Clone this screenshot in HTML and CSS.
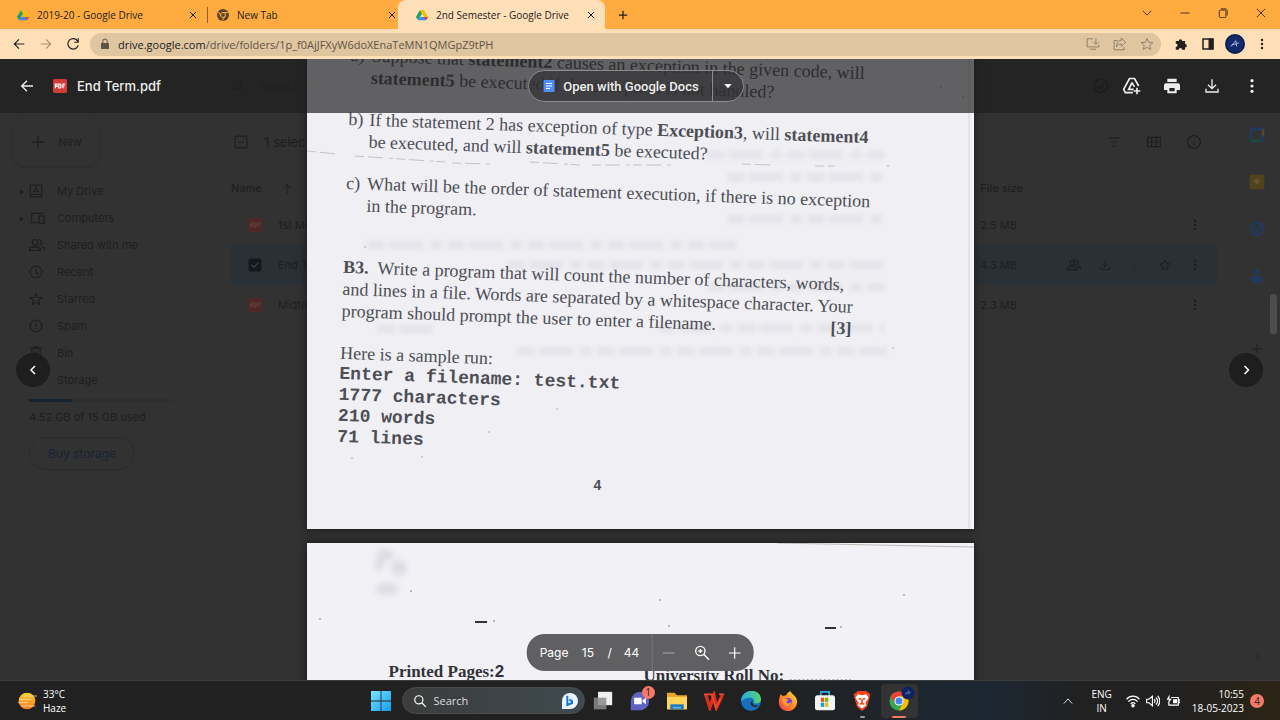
FILE: index.html
```html
<!DOCTYPE html>
<html lang="en">
<head>
<meta charset="utf-8">
<title>2nd Semester - Google Drive</title>
<link rel="stylesheet" href="styles.css">
</head>
<body>
<svg class="defs" aria-hidden="true">
  <symbol id="drive" viewBox="0 0 24 24"><g stroke="none"><path fill="#1aa260" d="M8 2 0 16l4 6.500L12 9z"/><path fill="#fbbc04" d="M8 2h8l8 14h-8z"/><path fill="#4285f4" d="M4 22.500 8 16h16l-4 6.500z"/><path fill="#ea4335" d="M16 16h8l-4 6.500z"/></g></symbol>
  <symbol id="chrome" viewBox="0 0 24 24"><g stroke="none"><circle cx="12" cy="12" r="11.500" fill="#34a853"/><path fill="#ea4335" d="M2 6.500A11.500 11.500 0 0 1 22 6.500H12L7.200 14.800z"/><path fill="#fbbc04" d="M22 6.500A11.500 11.500 0 0 1 12 23.500l4.800-8.700L12 6.500z"/><circle cx="12" cy="12" r="5.500" fill="#fff"/><circle cx="12" cy="12" r="4.200" fill="#4285f4"/></g></symbol>
  <symbol id="x" viewBox="0 0 24 24"><path d="M3 3l18 18M21 3 3 21"/></symbol>
  <symbol id="plus" viewBox="0 0 24 24"><path d="M12 2v20M2 12h20"/></symbol>
  <symbol id="back" viewBox="0 0 24 24"><path d="M21 12H4M12 4l-8 8 8 8"/></symbol>
  <symbol id="star" viewBox="0 0 24 24"><path d="m12 2.500 2.900 6.500 7.100.7-5.300 4.700 1.500 7L12 17.700l-6.200 3.700 1.500-7L2 9.700 9.100 9z"/></symbol>
  <symbol id="dots" viewBox="0 0 24 24"><g fill="currentColor" stroke="none"><circle cx="12" cy="4" r="2.400"/><circle cx="12" cy="12" r="2.400"/><circle cx="12" cy="20" r="2.400"/></g></symbol>
  <symbol id="download" viewBox="0 0 24 24"><path d="M12 2v13M6 10l6 6 6-6M3 16v5h18v-5"/></symbol>
  <symbol id="search" viewBox="0 0 24 24"><circle cx="10" cy="10" r="7"/><path d="m15 15 7 7"/></symbol>
  <symbol id="pdf" viewBox="0 0 24 24"><rect width="24" height="24" rx="3" fill="currentColor" stroke="none"/><path class="pdf-mark" d="M4 16V8.500h3v4H4M10 8.500v7h2l1.500-1.500v-4L12 8.500zM17 16V8.500h4M17 12h3"/></symbol>
  <symbol id="people" viewBox="0 0 24 24"><circle cx="9" cy="8" r="4"/><path d="M1 20v-2c2-4.500 14-4.500 16 0v2zM15 4a4 4 0 0 1 0 8M19 14c3 1 4 2.500 4 6"/></symbol>
</svg>

<header class="browser">
  <nav class="tabs" aria-label="Tabs">
    <div class="tab"><svg class="ico s12"><use href="#drive"/></svg><span>2019-20 - Google Drive</span><button aria-label="Close tab"><svg class="ico s8 bold"><use href="#x"/></svg></button></div>
    <div class="tab tab-split"><svg class="ico s12" viewBox="0 0 24 24"><circle cx="12" cy="12" r="12" fill="#5a4526" stroke="none"/><circle cx="12" cy="12" r="5" stroke="#ffab40"/><path d="M12 7h10M8 14 3 6M16 14l-5 9" stroke="#ffab40"/></svg><span>New Tab</span><button aria-label="Close tab"><svg class="ico s8 bold"><use href="#x"/></svg></button></div>
    <div class="tab tab-active"><svg class="ico s12"><use href="#drive"/></svg><span>2nd Semester - Google Drive</span><button aria-label="Close tab"><svg class="ico s8 bold"><use href="#x"/></svg></button></div>
    <button class="new-tab" aria-label="New tab"><svg class="ico s10 bold"><use href="#plus"/></svg></button>
    <div class="window-buttons">
      <button aria-label="Search tabs"><svg class="ico s10" viewBox="0 0 24 24"><path d="m2 7 10 10L22 7"/></svg></button>
      <button aria-label="Minimise"><svg class="ico s10" viewBox="0 0 24 24"><path d="M1 12h22"/></svg></button>
      <button aria-label="Restore"><svg class="ico s10" viewBox="0 0 24 24"><rect x="3" y="5" width="16" height="18" rx="3"/><path d="M7 2h12l3 3v13"/></svg></button>
      <button aria-label="Close"><svg class="ico s10" viewBox="0 0 24 24"><path d="M2 2l20 20M22 2 2 22"/></svg></button>
    </div>
  </nav>
  <div class="toolbar">
    <button aria-label="Back"><svg class="ico s14"><use href="#back"/></svg></button>
    <button class="muted" aria-label="Forward"><svg class="ico s14 flip"><use href="#back"/></svg></button>
    <button aria-label="Reload"><svg class="ico s14" viewBox="0 0 24 24"><path d="M20 7a9 9 0 1 0 1 7M21 2v7h-7"/></svg></button>
    <div class="address">
      <svg class="ico s12" viewBox="0 0 24 24"><rect x="4" y="10" width="16" height="12" rx="1" fill="#5f5545" stroke="none"/><path d="M7.500 11V6.500a4.500 4.500 0 0 1 9 0V11" stroke="#5f5545"/></svg>
      <span class="url"><b>drive.google.com</b>/drive/folders/1p_f0AjJFXyW6doXEnaTeMN1QMGpZ9tPH</span>
      <button aria-label="Install"><svg class="ico s14 thin" viewBox="0 0 24 24"><path d="M12 3H2v14h20v-4M7 21h10M17 2v10M12 8l5 5 5-5"/></svg></button>
      <button aria-label="Share"><svg class="ico s14 thin" viewBox="0 0 24 24"><path d="M8 6H2v16h17v-5M14 2l8 7-8 7v-4c-4 0-6 1-8 5 0-7 3-11 8-11z"/></svg></button>
      <button aria-label="Bookmark"><svg class="ico s14 thin"><use href="#star"/></svg></button>
    </div>
    <button aria-label="Extensions"><svg class="ico s14" viewBox="0 0 24 24"><path fill="#222" stroke="none" d="M3 7h5a3 3 0 1 1 6 0h5v5a3 3 0 1 1 0 6v4h-5a3 3 0 1 0-6 0H3v-5a3 3 0 1 0 0-6z"/></svg></button>
    <button aria-label="Side panel"><svg class="ico s12" viewBox="0 0 24 24"><rect x="2" y="2" width="20" height="20" stroke-width="3"/><path fill="#222" d="M14 2h8v20h-8z"/></svg></button>
    <button aria-label="Profile"><svg class="ico s20" viewBox="0 0 24 24"><circle cx="12" cy="12" r="11" fill="#102a6b" stroke="#081d4d"/><path d="m7 15 6-7 1 7M8 13c4 0 8-3 9-2" stroke="#c3ccec" stroke-width="1"/></svg></button>
    <button aria-label="Menu"><svg class="ico s12"><use href="#dots"/></svg></button>
  </div>
</header>

<main class="stage">
  <div class="drive">
    <aside class="side">
      <button class="new"><svg class="ico s16"><use href="#plus"/></svg>New</button>
      <nav class="side-nav">
        <a href="#"><i>▸</i><svg class="ico s14" viewBox="0 0 24 24"><rect x="2" y="2" width="20" height="20"/><path d="M2 18h20M8 13l4-7 4 7z"/></svg>My Drive</a>
        <a href="#"><i>▸</i><svg class="ico s16" viewBox="0 0 24 24"><path d="M4 17V5h18M1 19h12M15 9h8v11h-8z"/></svg>Computers</a>
        <a href="#"><i></i><svg class="ico s16"><use href="#people"/></svg>Shared with me</a>
        <a href="#"><i></i><svg class="ico s14" viewBox="0 0 24 24"><circle cx="12" cy="12" r="10"/><path d="M12 6v7l5 3"/></svg>Recent</a>
        <a href="#"><i></i><svg class="ico s14"><use href="#star"/></svg>Starred</a>
        <a href="#"><i></i><svg class="ico s14" viewBox="0 0 24 24"><circle cx="12" cy="12" r="10"/><path d="M12 6v8M12 16v2"/></svg>Spam</a>
        <a href="#"><i></i><svg class="ico s14" viewBox="0 0 24 24"><path d="M2 4h20M8 4V2h8v2M5 5v17h14V5M10 9v9M14 9v9"/></svg>Bin</a>
        <a href="#"><i></i><svg class="ico s14" viewBox="0 0 24 24"><path d="M6 18a5 5 0 0 1 0-10 7 7 0 0 1 13 2 4 4 0 0 1 0 8z"/></svg>Storage</a>
      </nav>
      <div class="quota"><div class="quota-used"></div></div>
      <p class="quota-text">4.52 GB of 15 GB used</p>
      <button class="buy">Buy storage</button>
    </aside>
    <section class="files">
      <div class="drive-search"><svg class="ico s14"><use href="#search"/></svg>Search in Drive</div>
      <div class="selection">
        <svg class="ico s14" viewBox="0 0 24 24"><rect x="2" y="2" width="20" height="20" rx="2"/><path d="M7 12h10"/></svg><span>1 selected</span>
        <svg class="ico s14" viewBox="0 0 24 24"><path d="M2 5h20M6 12h12M10 19h4"/></svg>
        <svg class="ico s14" viewBox="0 0 24 24"><path d="M1 4h22v16H1zM1 12h22M8 4v16M16 4v16"/></svg>
        <svg class="ico s14" viewBox="0 0 24 24"><circle cx="12" cy="12" r="11"/><path d="M12 11v7M12 6v2"/></svg>
      </div>
      <table>
        <thead><tr><th class="c-name">Name <svg class="ico s12 sort" viewBox="0 0 24 24"><path d="M12 22V3M4 11l8-8 8 8"/></svg></th><th>File size</th><th></th></tr></thead>
        <tbody>
          <tr><td><div class="file"><svg class="ico s14 red"><use href="#pdf"/></svg>1st Mid Term</div></td><td>2.5 MB</td><td><div class="acts"><svg class="ico s12"><use href="#dots"/></svg></div></td></tr>
          <tr class="picked"><td><div class="file"><svg class="ico s14" viewBox="0 0 24 24"><rect x="1" y="1" width="22" height="22" rx="3" fill="#15191c" stroke="none"/><path d="m6 12 4 4 8-8" stroke="#36424a"/></svg>End Term.pdf</div></td><td>4.3 MB</td><td><div class="acts"><svg class="ico s14"><use href="#people"/></svg><svg class="ico s12"><use href="#download"/></svg><svg class="ico s12 faint" viewBox="0 0 24 24"><path d="m8 20 8-16 6 12M3 18h12"/></svg><svg class="ico s12"><use href="#star"/></svg><svg class="ico s12"><use href="#dots"/></svg></div></td></tr>
          <tr><td><div class="file"><svg class="ico s14 red"><use href="#pdf"/></svg>Midterm</div></td><td>2.3 MB</td><td><div class="acts"><svg class="ico s12"><use href="#dots"/></svg></div></td></tr>
        </tbody>
      </table>
    </section>
    <aside class="apps">
      <svg class="ico s16" viewBox="0 0 24 24"><rect x="3" y="3" width="18" height="18" stroke="#20395e" stroke-width="4"/><path d="M21 3v10" stroke="#55452a" stroke-width="4"/><path d="M3 21h14" stroke="#234a30" stroke-width="4"/></svg>
      <svg class="ico s16" viewBox="0 0 24 24"><rect x="1" y="1" width="22" height="22" rx="2" fill="#51441a" stroke="none"/><circle cx="12" cy="11" r="4" fill="#625530" stroke="none"/></svg>
      <svg class="ico s16" viewBox="0 0 24 24"><circle cx="12" cy="12" r="9" stroke="#1f3a66" stroke-width="3"/><path d="m8 11 4 4 9-11" stroke="#1f3a66" stroke-width="3"/></svg>
      <svg class="ico s16" viewBox="0 0 24 24"><g fill="#1f3a5e" stroke="none"><circle cx="12" cy="6" r="4"/><rect x="4" y="12" width="16" height="10" rx="3"/></g></svg>
      <svg class="ico s12 add"><use href="#plus"/></svg>
      <svg class="ico s12 last" viewBox="0 0 24 24"><path d="m8 4 8 8-8 8"/></svg>
    </aside>
  </div>

  <div class="viewer">
    <div class="sheets">
      <article class="sheet sheet-first">
        <svg class="scan" viewBox="0 0 667 470" aria-hidden="true">
          <defs><filter id="soft"><feGaussianBlur stdDeviation="2"/></filter></defs>
          <g filter="url(#soft)" stroke="#c9c9d2" stroke-opacity=".28" stroke-width="9" stroke-dasharray="18 4 34 7 12 5" fill="none">
            <path d="M400 96h180M420 118h155M420 160h155M200 206h380M400 228h180M60 186h370M70 270h60M350 269h228M210 292h370"/>
          </g>
          <path d="M0 92l30 3M48 97l90 6M145 104l40 1M223 103l50 3M285 106h80M435 105l30 1M508 107h20" stroke="#c2c2c8" stroke-dasharray="9 4 15 6 4 3" fill="none"/>
          <g fill="#c0c0c8"><circle cx="58" cy="188" r="1"/><circle cx="45" cy="399" r="1"/><circle cx="115" cy="398" r="1"/><circle cx="250" cy="350" r="1"/><circle cx="182" cy="373" r="1"/><circle cx="581" cy="107" r="1"/><circle cx="634" cy="28" r="1"/><circle cx="656" cy="38" r="1"/><circle cx="586" cy="289" r="1"/></g>
          <path d="M662 0v470" stroke="#e4e4e8" stroke-width="2"/><path d="M666 0v470" stroke="#fff" stroke-width="1"/>
        </svg>
        <div class="print">
          <ol>
            <li><span>a)</span><p>Suppose that <b>statement2</b> causes an exception in the given code, will<br><b>statement5</b> be executed if the exception is not handled?</p></li>
            <li><span>b)</span><p>If the statement 2 has exception of type <b>Exception3</b>, will <b>statement4</b><br>be executed, and will <b>statement5</b> be executed?</p></li>
            <li><span>c)</span><p>What will be the order of statement execution, if there is no exception<br>in the program.</p></li>
          </ol>
          <div class="question"><p><b>B3.</b>&nbsp; Write a program that will count the number of characters, words,<br>and lines in a file. Words are separated by a whitespace character. Your<br>program should prompt the user to enter a filename.</p><b class="marks">[3]</b></div>
          <p class="sample-head">Here is a sample run:</p>
          <pre>Enter a filename: test.txt
1777 characters
210 words
71 lines</pre>
        </div>
        <span class="folio">4</span>
      </article>
      <article class="sheet sheet-second">
        <svg class="scan" viewBox="0 0 667 160" aria-hidden="true">
          <defs><filter id="haze"><feGaussianBlur stdDeviation="3"/></filter></defs>
          <path d="M470 0l197 4" stroke="#b9bab4" stroke-width="1"/>
          <g filter="url(#haze)" fill="#dcdce3"><ellipse cx="78" cy="12" rx="9" ry="6"/><ellipse cx="92" cy="25" rx="8" ry="8"/><ellipse cx="80" cy="46" rx="12" ry="6"/><ellipse cx="72" cy="22" rx="5" ry="6"/></g>
          <path d="M168 79h12M518 85h11" stroke="#33343a" stroke-width="2"/>
          <g fill="#a5a5ad"><circle cx="13" cy="76" r="1"/><circle cx="187" cy="78" r="1"/><circle cx="362" cy="83" r="1"/><circle cx="104" cy="48" r="1"/><circle cx="353" cy="57" r="1"/><circle cx="534" cy="84" r="1"/><circle cx="597" cy="52" r="1"/></g>
        </svg>
        <div class="form-line"><b>Printed Pages:<span class="hand">2</span></b><b>University Roll No: <span class="leader">...............</span></b></div>
      </article>
    </div>

    <header class="viewer-bar">
      <div class="doc-id"><button aria-label="Back to Drive"><svg class="ico s16"><use href="#back"/></svg></button><svg class="ico s14 pdf-icon"><use href="#pdf"/></svg><h1>End Term.pdf</h1></div>
      <div class="open-with"><button class="open"><svg class="ico s12" viewBox="0 0 24 24"><rect x="1" y="0" width="22" height="24" rx="2" fill="#4f8df7" stroke="none"/><path d="M6 7h12M6 12h12M6 17h8" stroke="#fff"/></svg>Open with Google Docs</button><button class="more" aria-label="More apps"><svg class="ico s8" viewBox="0 0 24 24"><path d="M1 6h22L12 19z" fill="#fff" stroke="none"/></svg></button></div>
      <div class="viewer-actions">
        <svg class="ico s16 ghost" viewBox="0 0 24 24"><circle cx="12" cy="12" r="10"/><path d="m7 12 4 4 6-7"/></svg>
        <button aria-label="Add shortcut to Drive"><svg class="ico s20" viewBox="0 0 24 24"><path d="M13 20H4l-2-4L9 3h6l5 9M12 8l-4 8h6M12 8l3 5M18 14v8M14 18h8"/></svg></button>
        <button aria-label="Print"><svg class="ico s16" viewBox="0 0 24 24"><path fill="#eee" stroke="none" d="M5 1h14v5H5zM3 8h18a3 3 0 0 1 3 3v7h-5v5H5v-5H0v-7a3 3 0 0 1 3-3zm5 7v5h8v-5z"/></svg></button>
        <button aria-label="Download"><svg class="ico s16"><use href="#download"/></svg></button>
        <button class="kebab" aria-label="More actions"><svg class="ico s16"><use href="#dots"/></svg></button>
      </div>
    </header>

    <button class="flip-page prev" aria-label="Previous"><svg class="ico s12 bold" viewBox="0 0 24 24"><path d="m16 4-8 8 8 8"/></svg></button>
    <button class="flip-page next" aria-label="Next"><svg class="ico s12 bold" viewBox="0 0 24 24"><path d="m9 4 8 8-8 8"/></svg></button>
    <div class="scroll-thumb"></div>

    <div class="pager">
      <label for="page-no">Page</label><input id="page-no" value="15"><span>/</span><span class="total">44</span>
      <div class="zoomers">
        <button class="dim" aria-label="Zoom out"><svg class="ico s14" viewBox="0 0 24 24"><path d="M2 12h20"/></svg></button>
        <button aria-label="Fit"><svg class="ico s16" viewBox="0 0 24 24"><circle cx="10" cy="9" r="7"/><path d="m15 14 8 8M10 6v6M7 9h6"/></svg></button>
        <button aria-label="Zoom in"><svg class="ico s14"><use href="#plus"/></svg></button>
      </div>
    </div>
  </div>
</main>

<footer class="taskbar">
  <div class="weather">
    <svg class="ico s20" viewBox="0 0 24 24"><defs><linearGradient id="sun" x2="0" y2="1"><stop stop-color="#ffcf28"/><stop offset="1" stop-color="#f27b25"/></linearGradient></defs><circle cx="12" cy="12" r="10" fill="url(#sun)" stroke="none"/><path d="M8 6h16M3 10h14M1 14h12M6 18h16" stroke="#f6d9a6" stroke-width="1"/></svg>
    <div>33°C<br>Haze</div>
  </div>
  <div class="launcher">
    <button class="app" aria-label="Start"><svg class="ico s20" viewBox="0 0 24 24"><defs><linearGradient id="win" x2="1" y2="1"><stop stop-color="#7be4ff"/><stop offset="1" stop-color="#129df0"/></linearGradient></defs><path fill="url(#win)" stroke="none" d="M0 0h11.500v11.500H0zM12.500 0H24v11.500H12.500zM0 12.500h11.500V24H0zM12.500 12.500H24V24H12.500z"/></svg></button>
    <div class="task-search"><svg class="ico s14"><use href="#search"/></svg><input aria-label="Search" placeholder="Search"><svg class="ico s16" viewBox="0 0 24 24"><circle cx="12" cy="12" r="12" fill="#eaf5ff" stroke="none"/><path d="M0 12v12h12" fill="#eaf5ff" stroke="none"/><path d="M8 4v14l7-3v-3l-4-2" stroke="#1675d8" stroke-width="3"/></svg></div>
    <button class="app" aria-label="Task view"><svg class="ico s20" viewBox="0 0 24 24"><g stroke="none"><rect x="6" y="1" width="17" height="16" fill="#eee"/><rect x="1" y="8" width="15" height="14" fill="#8b8b8b" fill-opacity=".85"/></g></svg></button>
    <button class="app" aria-label="Chat"><svg class="ico s20" viewBox="0 0 24 24"><circle cx="12" cy="12" r="11" fill="#6262c4" stroke="none"/><path d="M1 12v11h11" fill="#6262c4" stroke="none"/><path fill="#fff" stroke="none" d="M5 8h9v8H5zM15 11l4-3v8l-4-3z"/></svg><span class="badge">1</span></button>
    <button class="app" aria-label="File Explorer"><svg class="ico s20" viewBox="0 0 24 24"><g stroke="none"><path fill="#e9a520" d="M0 2h9l3 3h12v17H0z"/><path fill="#ffd65a" d="M0 7h24v15H0z"/><path fill="#1878be" d="M4 16h16v6H4z"/><path fill="#63b8e8" d="M7 19h10v2H7z"/></g></svg></button>
    <button class="app" aria-label="WPS Office"><svg class="ico s20" viewBox="0 0 24 24"><path d="M2 4l5 16L12 5l3 15 7-15" stroke="#d92d1d" stroke-width="4"/><path d="M0 4h9l5 16 6-11M9 4h4M18 4h6" stroke="#f4472f" stroke-width="2"/></svg></button>
    <button class="app" aria-label="Edge"><svg class="ico s20" viewBox="0 0 24 24"><defs><linearGradient id="edge" x2="1"><stop stop-color="#24a8e8"/><stop offset="1" stop-color="#55d66b"/></linearGradient></defs><g stroke="none"><circle cx="12" cy="12" r="12" fill="#1770bd"/><path fill="url(#edge)" d="M0 12C1-4 24-4 24 10c0 5-6 6-9 4 2-2 0-6-4-6-6 0-9 3-11 4z"/><path fill="#222" d="M14 12c-2 4 3 7 8 5-6 5-12 0-10-4z"/></g></svg></button>
    <button class="app" aria-label="Firefox"><svg class="ico s20" viewBox="0 0 24 24"><defs><linearGradient id="fox" x1="1" x2="0" y2="1"><stop stop-color="#ffe23c"/><stop offset=".5" stop-color="#ff8b26"/><stop offset="1" stop-color="#f0325c"/></linearGradient></defs><g stroke="none"><path fill="url(#fox)" d="M3 4l3 2 4-1c1-3 3-4 5-5 0 3 7 5 8 12 0 16-22 16-22 1 0-4 1-5 2-9z"/><circle cx="12" cy="13" r="5" fill="#7543d8"/><path fill="#ff9d28" d="M5 9c4-1 5 1 8 1l-3 3c1 3 5 2 7 0-1 6-9 7-11 1z"/></g></svg></button>
    <button class="app" aria-label="Microsoft Store"><svg class="ico s20" viewBox="0 0 24 24"><path d="M7 6V1h10v5" stroke="#35a7e2" stroke-width="2"/><g stroke="none"><rect y="5" width="24" height="18" rx="3" fill="#f3f3f3"/><path fill="#f25022" d="M7 8h4v5H7z"/><path fill="#7fba00" d="M12 8h4v5h-4z"/><path fill="#00a4ef" d="M7 14h4v5H7z"/><path fill="#ffb900" d="M12 14h4v5h-4z"/></g></svg></button>
    <button class="app open-app" aria-label="Brave"><svg class="ico s20" viewBox="0 0 24 24"><path fill="#f1451f" stroke="none" d="m7 0h10l5 4-1 4-3 11-6 5-6-5L3 8 2 4z"/><path fill="#fff" stroke="none" d="m7 4 5 1 5-1 3 4-4 6 1 3-5 4-5-4 1-3-4-6z"/><path d="m8 9 3 1M16 9l-3 1M12 10v5M9 16l3-1 3 1" stroke="#f1451f"/></svg></button>
    <button class="app active-app" aria-label="Chrome"><svg class="ico s20"><use href="#chrome"/></svg><svg class="ico s14 avatar" viewBox="0 0 24 24"><circle cx="12" cy="12" r="11" fill="#0b2363" stroke="none"/><path d="m7 15 6-7 1 7M8 13c4 0 8-3 9-2" stroke="#8093cc" stroke-width="1"/></svg></button>
  </div>
  <div class="tray">
    <svg class="ico s10 chev" viewBox="0 0 24 24"><path d="m2 18 10-11 10 11"/></svg>
    <div class="lang">ENG<br>IN</div>
    <svg class="ico s14" viewBox="0 0 24 24"><path d="M1 9c6-7 16-7 22 0M4 13c5-5 11-5 16 0M8 17c3-3 5-3 8 0"/><circle cx="12" cy="20" r="2" fill="#fff"/></svg>
    <svg class="ico s14" viewBox="0 0 24 24"><path d="M1 9h4l6-5v16l-6-5H1zM14 9c2 2 2 4 0 6M17 6c4 4 4 8 0 12M20 3c5 6 5 12 0 18"/></svg>
    <svg class="ico s14" viewBox="0 0 24 24"><path d="M9 6h12v13H5v-5M22 10h2v5h-2"/><path fill="#fff" stroke="none" d="M12 9h7v7h-7zM6 1 1 10h4l-2 7 7-9H6z"/></svg>
    <div class="clock">10:55<br>18-05-2023</div>
    <span class="count">4</span>
  </div>
</footer>
</body>
</html>
```
FILE: styles.css
```css
* { box-sizing: border-box; }
body {
  margin: 0;
  height: 100vh;
  display: flex;
  flex-direction: column;
  overflow: hidden;
  font-family: Inter, Roboto, sans-serif;
  font-size: 12px;
}
p, h1, ol, pre { margin: 0; padding: 0; }
button, input { font: inherit; color: inherit; border: 0; background: none; padding: 0; }
button { display: inline-flex; align-items: center; justify-content: center; }
a { color: inherit; text-decoration: none; }
.defs { display: none; }
.ico { flex: none; fill: none; stroke: currentColor; stroke-width: 2; }
.s8 { width: 8px; height: 8px; }
.s10 { width: 10px; height: 10px; }
.s12 { width: 12px; height: 12px; }
.s14 { width: 14px; height: 14px; }
.s16 { width: 16px; height: 16px; }
.s20 { width: 20px; height: 20px; }
.bold { stroke-width: 3; }
.thin { stroke-width: 1; }
.flip { transform: rotate(180deg); }
.pdf-mark { stroke: var(--mark, #ffffff); stroke-width: 2; }

/* Browser chrome */
.browser { flex: none; font-family: "Open Sans", "Noto Sans", sans-serif; font-size: 10px; color: #222; }
.tabs { display: flex; height: 29px; background: #ffab40; }
.tab { display: flex; align-items: center; gap: 8px; width: 199px; padding: 0 0 0 17px; }
.tab span { flex: 1; white-space: nowrap; }
.tab button { width: 12px; height: 12px; }
.tab-split { padding-left: 18px; background: linear-gradient(#8b632e, #8b632e) 8px 50% / 1px 16px no-repeat; }
.tab-active { width: 207px; padding: 0 8px 0 18px; background: #ffdfb8; border-radius: 8px 8px 0 0; }
.new-tab { width: 36px; }
.window-buttons { display: flex; margin-left: auto; height: 26px; }
.window-buttons button { width: 38px; }
.toolbar { display: flex; align-items: center; height: 30px; padding: 0 5px; background: #ffdfb8; }
.toolbar > button { width: 27px; height: 27px; }
.muted { color: #a79272; }
.address { flex: 1; display: flex; align-items: center; gap: 7px; height: 23px; margin: 0 6px 0 4px; padding: 0 4px 0 9px; border-radius: 12px; background: #dfc5a0; color: #5f5545; }
.url { flex: 1; font-size: 11px; white-space: nowrap; }
.url b { font-weight: 400; color: #222; }
.address button { width: 20px; }

/* Dimmed Drive behind the viewer */
.stage { flex: 1; min-height: 0; position: relative; background: #323232; color: #1e1e1e; overflow: hidden; }
.drive { display: grid; grid-template-columns: 231px 1fr 46px; height: 100%; }
.side { padding: 58px 0 0 13px; font-size: 11px; }
.new { gap: 12px; width: 86px; height: 49px; border-radius: 14px; box-shadow: 0 1px 3px #2a2a2a; }
.side-nav { display: flex; flex-direction: column; margin: 11px 0 8px; }
.side-nav a { display: grid; grid-template-columns: 9px 28px auto; justify-content: start; align-items: center; height: 27px; padding-left: 7px; }
.side-nav i { font-style: normal; font-size: 8px; }
.quota { width: 144px; height: 3px; margin: -2px 0 0 16px; background: #2e2e2e; }
.quota-used { width: 30%; height: 100%; background: #17222f; }
.quota-text { margin: 7px 0 12px 16px; line-height: 16px; }
.buy { width: 106px; height: 33px; margin-left: 16px; border: 1px solid #292b2d; border-radius: 17px; color: #172233; font-size: 12px; }
.files { padding-right: 17px; }
.drive-search { display: flex; align-items: center; gap: 16px; height: 54px; color: #262626; }
.selection { display: flex; align-items: center; gap: 26px; height: 58px; padding: 0 16px 0 3px; font-size: 13px; }
.selection span { flex: 1; margin-left: -10px; }
table { width: 100%; border-collapse: collapse; font-size: 11px; }
th { height: 34px; padding: 0; text-align: left; font-weight: 500; }
.c-name { width: 76%; }
.sort { margin-left: 16px; vertical-align: middle; }
td { height: 40px; padding: 0; }
.picked { background: #293036; }
.file { display: flex; align-items: center; gap: 16px; padding-left: 17px; }
.red { color: #4f2928; --mark: #633c3a; }
.acts { display: flex; justify-content: flex-end; align-items: center; gap: 18px; padding-right: 16px; }
.faint { color: #262c31; }
.apps { display: flex; flex-direction: column; align-items: center; padding: 68px 0 17px; gap: 31px; }
.add { margin-top: 28px; }
.last { margin: auto 0 0; color: #242424; }

/* Viewer */
.viewer { position: absolute; inset: 0; overflow: hidden; color: #eee; }
.sheets { display: flex; flex-direction: column; align-items: center; gap: 14px; }
.sheet { position: relative; width: 667px; overflow: hidden; background: #efeff4; color: #4c4e54; box-shadow: 0 0 8px 1px #1d1d1d; font-family: "Liberation Serif", serif; font-size: 18px; line-height: 22px; }
.sheet-first { height: 470px; }
.sheet-second { height: 160px; background: #f1f1f6; }
.scan { position: absolute; inset: 0; width: 100%; fill: none; }
.print { position: relative; margin: -15px 0 0 44px; width: 540px; transform: rotate(2deg); transform-origin: left top; white-space: nowrap; }
.print ol { display: flex; flex-direction: column; gap: 20px; list-style: none; }
.print li { display: grid; grid-template-columns: 21px auto; }
.question { display: flex; align-items: flex-end; justify-content: space-between; margin-top: 40px; }
.question p { width: 0; }
.marks { margin-right: 30px; }
.sample-head { margin-top: 20px; }
.print pre { font: bold 18px/21px "Liberation Mono", monospace; }
.folio { position: absolute; left: 287px; bottom: 34px; font: bold 14px/20px "Liberation Sans", sans-serif; }
.form-line { position: relative; display: grid; grid-template-columns: 255px auto; align-items: start; padding: 118px 0 0 82px; color: #303238; font-size: 17px; }
.form-line b:last-child { padding-top: 4px; }
.hand { font-family: "Liberation Sans", sans-serif; }
.leader { color: #a0a0a6; font-weight: 400; }

.viewer-bar { position: absolute; inset: 0 0 auto; display: grid; grid-template-columns: 1fr auto 1fr; align-items: center; height: 54px; padding-right: 8px; background: rgba(29, 29, 29, .68); }
.doc-id { display: flex; align-items: center; padding-left: 19px; }
.pdf-icon { margin: 0 10px 0 18px; color: #d53b36; }
.doc-id h1 { font-size: 13px; font-weight: 500; }
.open-with { display: flex; height: 32px; border: 1px solid #8c8c8e; border-radius: 16px; background: rgba(50, 50, 52, .72); font-family: Roboto, sans-serif; font-size: 13px; }
.open { gap: 8px; padding: 0 13px 0 14px; font-weight: 500; }
.more { width: 31px; border-left: 1px solid #8c8c8e; }
.viewer-actions { display: flex; justify-content: flex-end; align-items: center; }
.viewer-actions button { width: 40px; height: 30px; }
.ghost { margin-right: 3px; color: #1c1c1c; }

.flip-page { position: absolute; top: 50%; width: 34px; height: 34px; margin-top: -17px; border-radius: 50%; background: #1e1e1e; color: #fff; }
.prev { left: 16px; }
.next { right: 17px; }
.scroll-thumb { position: absolute; top: 235px; right: 3px; width: 7px; height: 40px; border-radius: 3px; background: #4d4d4d; }
.pager { position: absolute; left: 50%; bottom: 9px; transform: translateX(-50%); display: flex; align-items: center; height: 37px; padding-left: 13px; border-radius: 18px; background: #606062; color: #fff; }
.pager input { width: 39px; text-align: center; }
.total { padding: 0 12px 0 12px; }
.zoomers { display: flex; align-self: stretch; border-left: 1px solid #77777a; padding-right: 2px; }
.zoomers button { width: 33px; }
.dim { color: #aaa; }

/* Taskbar */
.taskbar { flex: none; display: grid; grid-template-columns: 1fr auto 1fr; align-items: center; height: 40px; border-top: 1px solid #3d3d3d; background: linear-gradient(90deg, #212121 60%, #1c2733 77%, #212121 84%, #212121 92%, #2c2415); color: #fff; font-family: "Open Sans", "Noto Sans", sans-serif; font-size: 10px; line-height: 14px; }
.weather { display: flex; align-items: center; gap: 6px; padding-left: 17px; }
.launcher { display: flex; align-items: center; }
.app { position: relative; width: 37px; height: 34px; }
.task-search { display: flex; align-items: center; gap: 7px; width: 183px; height: 27px; margin: 0 0 0 2px; padding: 0 6px 0 10px; border-radius: 14px; background: linear-gradient(90deg, #3c3c3c, #3e4a50); border: 1px solid #4c4c4c; }
.task-search input { flex: 1; min-width: 0; font-size: 11px; }
.task-search input::placeholder { color: #ddd; opacity: 1; }
.badge { position: absolute; top: 2px; right: 4px; width: 13px; height: 13px; border-radius: 50%; background: #f47b67; color: #222; line-height: 13px; }
.open-app::after, .active-app::after { content: ""; position: absolute; bottom: 0; width: 5px; height: 2px; border-radius: 1px; background: #999; }
.active-app { border-radius: 4px; background: #333; }
.active-app::after { width: 14px; background: #f47b67; }
.avatar { position: absolute; top: 2px; right: 3px; }
.tray { display: flex; align-items: center; justify-content: flex-end; gap: 6px; padding-right: 16px; }
.chev { margin-right: 12px; }
.lang { margin-right: 8px; text-align: center; }
.clock { margin-left: 6px; text-align: right; }
.count { width: 14px; height: 14px; border-radius: 50%; background: #f47b67; color: #222; text-align: center; }
```
